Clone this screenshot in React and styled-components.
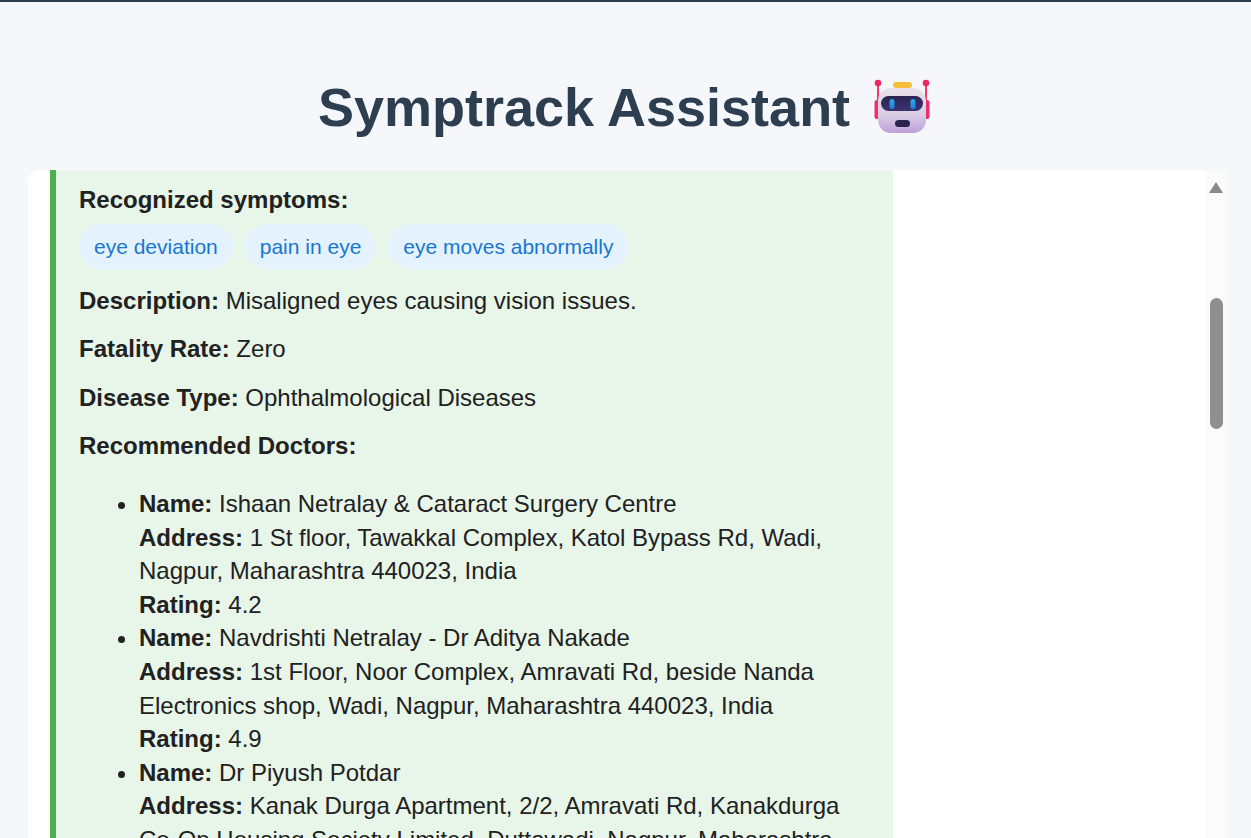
import React from "react";
import styled, { createGlobalStyle } from "styled-components";

const GlobalStyle = createGlobalStyle`
    html, body {
        margin: 0;
        height: 100%;
        overflow: hidden;
        background: #f5f7fb;
        font-family: "Liberation Sans", Arial, sans-serif;
    }
`;

const Page = styled.div`
    height: 838px;
    display: flex;
    flex-direction: column;
    overflow: hidden;
    border-top: 2px solid #2c3e50;
    box-sizing: border-box;
`;

const Title = styled.h1`
    margin: 0;
    height: 168px;
    box-sizing: border-box;
    display: flex;
    align-items: center;
    justify-content: center;
    padding-top: 42px;
    gap: 21px;
    font-size: 54px;
    font-weight: 700;
    color: #2c3e50;
`;

const RobotSvg = styled.svg`
    margin-top: 4px;
    flex-shrink: 0;
`;

const Card = styled.div`
    flex: 1;
    min-height: 0;
    margin: 0 23px 0 28px;
    display: flex;
    background: #fff;
    border-radius: 12px 0 0 0;
    overflow: hidden;
`;

const Messages = styled.div`
    flex: 1;
    min-width: 0;
    padding-left: 22px;
`;

const Bubble = styled.div`
    width: 843px;
    height: 100%;
    box-sizing: border-box;
    padding: 13px 24px 0 23px;
    background: #e8f5e9;
    border-left: 6px solid #4caf50;
    color: #212121;
    font-size: 24px;
    line-height: 33.6px;
`;

const Para = styled.p`
    margin: 0 0 15px;
`;

const Chips = styled.div`
    display: flex;
    gap: 12px;
    margin: -8px 0 15px;
`;

const Chip = styled.span`
    padding: 6px 15px;
    height: 33px;
    border-radius: 23px;
    background: #e3f2fd;
    color: #1976d2;
    font-size: 21px;
`;

const DoctorList = styled.ul`
    margin: 24px 0 0;
    padding: 0 0 0 60px;
`;

const ScrollTrack = styled.div`
    width: 22px;
    flex-shrink: 0;
    box-sizing: border-box;
    background: #fbfbfb;
    display: flex;
    flex-direction: column;
    align-items: center;
    padding: 12px 2px 0 0;
`;

const ScrollArrow = styled.div`
    width: 0;
    height: 0;
    border-left: 7.5px solid transparent;
    border-right: 7.5px solid transparent;
    border-bottom: 11px solid #8a8a8a;
`;

const ScrollThumb = styled.div`
    width: 13px;
    height: 131px;
    margin-top: 105px;
    border-radius: 7px;
    background: #8f8f8f;
`;

const doctors = [
    {
        name: "Ishaan Netralay & Cataract Surgery Centre",
        address: "1 St floor, Tawakkal Complex, Katol Bypass Rd, Wadi, Nagpur, Maharashtra 440023, India",
        rating: "4.2",
    },
    {
        name: "Navdrishti Netralay - Dr Aditya Nakade",
        address: "1st Floor, Noor Complex, Amravati Rd, beside Nanda Electronics shop, Wadi, Nagpur, Maharashtra 440023, India",
        rating: "4.9",
    },
    {
        name: "Dr Piyush Potdar",
        address: "Kanak Durga Apartment, 2/2, Amravati Rd, Kanakdurga Co-Op Housing Society Limited, Duttawadi, Nagpur, Maharashtra 440023, India",
        rating: "5",
    },
];

const RobotIcon = () => (
    <RobotSvg width="62" height="62" viewBox="10 8 62 62" aria-hidden="true">
        <defs>
            <linearGradient id="robotBody" x1="0" y1="0" x2="0" y2="1">
                <stop offset="0" stopColor="#e9e2ea" />
                <stop offset="0.6" stopColor="#d9cde4" />
                <stop offset="1" stopColor="#bd9fdc" />
            </linearGradient>
            <linearGradient id="robotVisor" x1="0" y1="0" x2="0" y2="1">
                <stop offset="0" stopColor="#2a2550" />
                <stop offset="1" stopColor="#3c3270" />
            </linearGradient>
            <linearGradient id="robotEye" x1="0" y1="0" x2="0" y2="1">
                <stop offset="0" stopColor="#2fa8f0" />
                <stop offset="1" stopColor="#1f7fd8" />
            </linearGradient>
        </defs>
        <path d="M17 16V32M65 16V32" stroke="#f0386b" strokeWidth="2" />
        <circle cx="17" cy="13" r="3.3" fill="#e8285f" />
        <circle cx="65" cy="13" r="3.3" fill="#e8285f" />
        <rect x="13.5" y="30" width="7" height="19" rx="2.5" fill="#ee2f68" />
        <rect x="61.5" y="30" width="7" height="19" rx="2.5" fill="#ee2f68" />
        <rect x="32" y="12" width="19" height="6" rx="3" fill="#f5bf3a" />
        <rect x="17" y="18" width="48" height="45" rx="13" fill="url(#robotBody)" />
        <rect x="20" y="26" width="42" height="15" rx="7.5" fill="url(#robotVisor)" />
        <rect x="28.5" y="29" width="5" height="10" rx="2.5" fill="url(#robotEye)" />
        <rect x="49.5" y="29" width="5" height="10" rx="2.5" fill="url(#robotEye)" />
        <rect x="34" y="50" width="15" height="7" rx="3.5" fill="#2a2350" />
    </RobotSvg>
);

const App = () => (
    <Page>
        <GlobalStyle />
        <Title>
            Symptrack Assistant
            <RobotIcon />
        </Title>
        <Card>
            <Messages>
                <Bubble>
                    <Para><strong>Recognized symptoms:</strong></Para>
                    <Chips>
                        <Chip>eye deviation</Chip>
                        <Chip>pain in eye</Chip>
                        <Chip>eye moves abnormally</Chip>
                    </Chips>
                    <Para><strong>Description:</strong> Misaligned eyes causing vision issues.</Para>
                    <Para><strong>Fatality Rate:</strong> Zero</Para>
                    <Para><strong>Disease Type:</strong> Ophthalmological Diseases</Para>
                    <Para><strong>Recommended Doctors:</strong></Para>
                    <DoctorList>
                        {doctors.map(doctor => (
                            <li key={doctor.name}>
                                <strong>Name:</strong> {doctor.name}<br />
                                <strong>Address:</strong> {doctor.address}<br />
                                <strong>Rating:</strong> {doctor.rating}
                            </li>
                        ))}
                    </DoctorList>
                </Bubble>
            </Messages>
            <ScrollTrack>
                <ScrollArrow />
                <ScrollThumb />
            </ScrollTrack>
        </Card>
    </Page>
);

export default App;
